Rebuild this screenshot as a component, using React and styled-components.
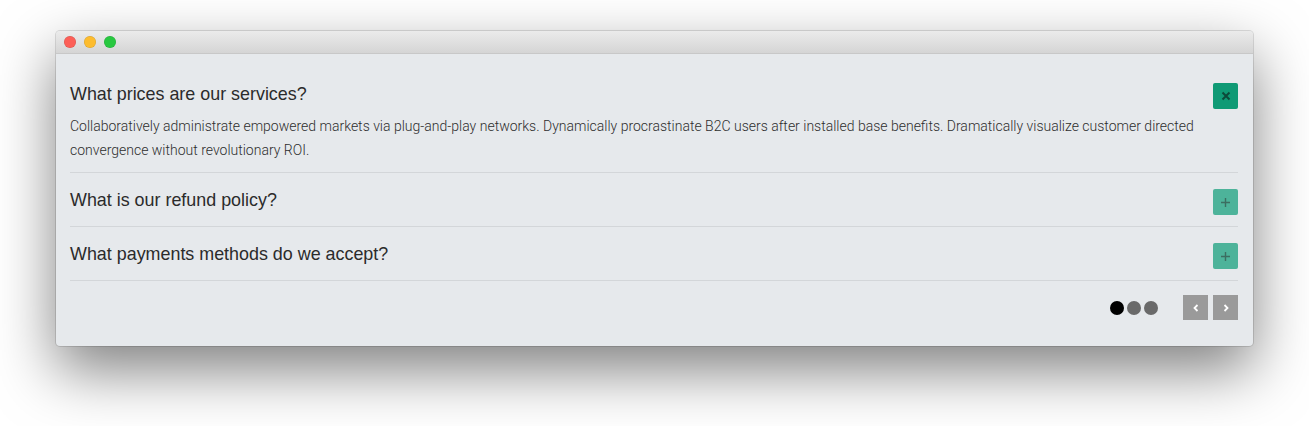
import React, { useState } from "react";
import styled, { createGlobalStyle } from "styled-components";

const GlobalStyle = createGlobalStyle`
  html, body {
    margin: 0;
    padding: 0;
    background: #ffffff;
  }
  * {
    box-sizing: border-box;
  }
`;

const Page = styled.div`
  width: 1309px;
  height: 426px;
  padding: 31px 0 0 56px;
  overflow: hidden;
`;

const Window = styled.div`
  width: 1197px;
  height: 315px;
  border-radius: 4px;
  overflow: hidden;
  background: #e6e9ec;
  box-shadow: 0 24px 60px rgba(0, 0, 0, 0.5), 0 0 0 1px rgba(0, 0, 0, 0.12);
  display: flex;
  flex-direction: column;
`;

const TitleBar = styled.div`
  height: 23px;
  flex-shrink: 0;
  background: linear-gradient(#ebebeb, #d5d5d5);
  border-bottom: 1px solid #c8c8c8;
  display: flex;
  align-items: center;
  gap: 8px;
  padding-left: 8px;
`;

const Light = styled.span`
  width: 12px;
  height: 12px;
  border-radius: 50%;
  background: ${(p) => p.$color};
  box-shadow: inset 0 0 0 0.5px rgba(0, 0, 0, 0.15);
`;

const Content = styled.div`
  flex: 1;
  padding: 13px 15px 14px 14px;
  display: flex;
  flex-direction: column;
`;

const Item = styled.div`
  border-bottom: 1px solid #d3d6d9;
  padding: 16px 0 ${(p) => (p.$open ? "10px" : "11px")};
`;

const Header = styled.div`
  height: 26px;
  display: flex;
  align-items: center;
  justify-content: space-between;
`;

const Question = styled.h3`
  margin: -3px 0 0;
  font-family: "Liberation Sans", Arial, sans-serif;
  font-weight: 400;
  font-size: 17.9px;
  color: #2b2b2b;
`;

const Toggle = styled.button`
  width: 25px;
  height: 26px;
  border: none;
  padding: 0;
  border-radius: 2px;
  background: ${(p) => (p.$open ? "#0f9a75" : "#4db39a")};
  color: ${(p) => (p.$open ? "#0c4a3a" : "#3c6e61")};
  display: flex;
  align-items: center;
  justify-content: center;
  cursor: pointer;
`;

const Answer = styled.p`
  margin: 5px 0 0;
  font-family: Roboto, "Liberation Sans", sans-serif;
  font-weight: 300;
  font-size: 14px;
  line-height: 24px;
  color: #2e2e2e;
`;

const Footer = styled.div`
  padding-top: 14px;
  display: flex;
  align-items: center;
  justify-content: flex-end;
`;

const Dots = styled.div`
  display: flex;
  gap: 3px;
  margin-right: 25px;
`;

const Dot = styled.span`
  width: 14px;
  height: 14px;
  border-radius: 50%;
  background: ${(p) => (p.$active ? "#000000" : "#6a6a6a")};
`;

const Nav = styled.div`
  display: flex;
  gap: 5px;
`;

const NavButton = styled.button`
  width: 25px;
  height: 25px;
  border: none;
  padding: 0;
  background: #9a9a9a;
  color: #ffffff;
  display: flex;
  align-items: center;
  justify-content: center;
`;

const Plus = () => (
  <svg width="11" height="11" viewBox="0 0 11 11">
    <path d="M5.5 1v9M1 5.5h9" stroke="currentColor" strokeWidth="1.4" />
  </svg>
);

const Cross = () => (
  <svg width="10" height="10" viewBox="0 0 10 10">
    <path d="M1.5 1.5l7 7M8.5 1.5l-7 7" stroke="currentColor" strokeWidth="2" />
  </svg>
);

const Chevron = ({ dir }) => (
  <svg width="8" height="10" viewBox="0 0 8 10">
    <path
      d={dir === "left" ? "M5.5 2L2.5 5l3 3" : "M2.5 2l3 3-3 3"}
      stroke="currentColor"
      strokeWidth="1.8"
      fill="none"
    />
  </svg>
);

const faqs = [
  {
    q: "What prices are our services?",
    a: "Collaboratively administrate empowered markets via plug-and-play networks. Dynamically procrastinate B2C users after installed base benefits. Dramatically visualize customer directed convergence without revolutionary ROI.",
  },
  {
    q: "What is our refund policy?",
    a: "",
  },
  {
    q: "What payments methods do we accept?",
    a: "",
  },
];

const App = () => {
  const [open, setOpen] = useState(0);

  return (
    <>
      <GlobalStyle />
      <Page>
        <Window>
          <TitleBar>
            <Light $color="#fc5f57" />
            <Light $color="#fdbc2e" />
            <Light $color="#28c840" />
          </TitleBar>
          <Content>
            {faqs.map((f, i) => (
              <Item key={i} $open={open === i}>
                <Header>
                  <Question>{f.q}</Question>
                  <Toggle
                    $open={open === i}
                    onClick={() => setOpen(open === i ? -1 : i)}
                  >
                    {open === i ? <Cross /> : <Plus />}
                  </Toggle>
                </Header>
                {open === i && <Answer>{f.a}</Answer>}
              </Item>
            ))}
            <Footer>
              <Dots>
                <Dot $active />
                <Dot />
                <Dot />
              </Dots>
              <Nav>
                <NavButton>
                  <Chevron dir="left" />
                </NavButton>
                <NavButton>
                  <Chevron dir="right" />
                </NavButton>
              </Nav>
            </Footer>
          </Content>
        </Window>
      </Page>
    </>
  );
};

export default App;
